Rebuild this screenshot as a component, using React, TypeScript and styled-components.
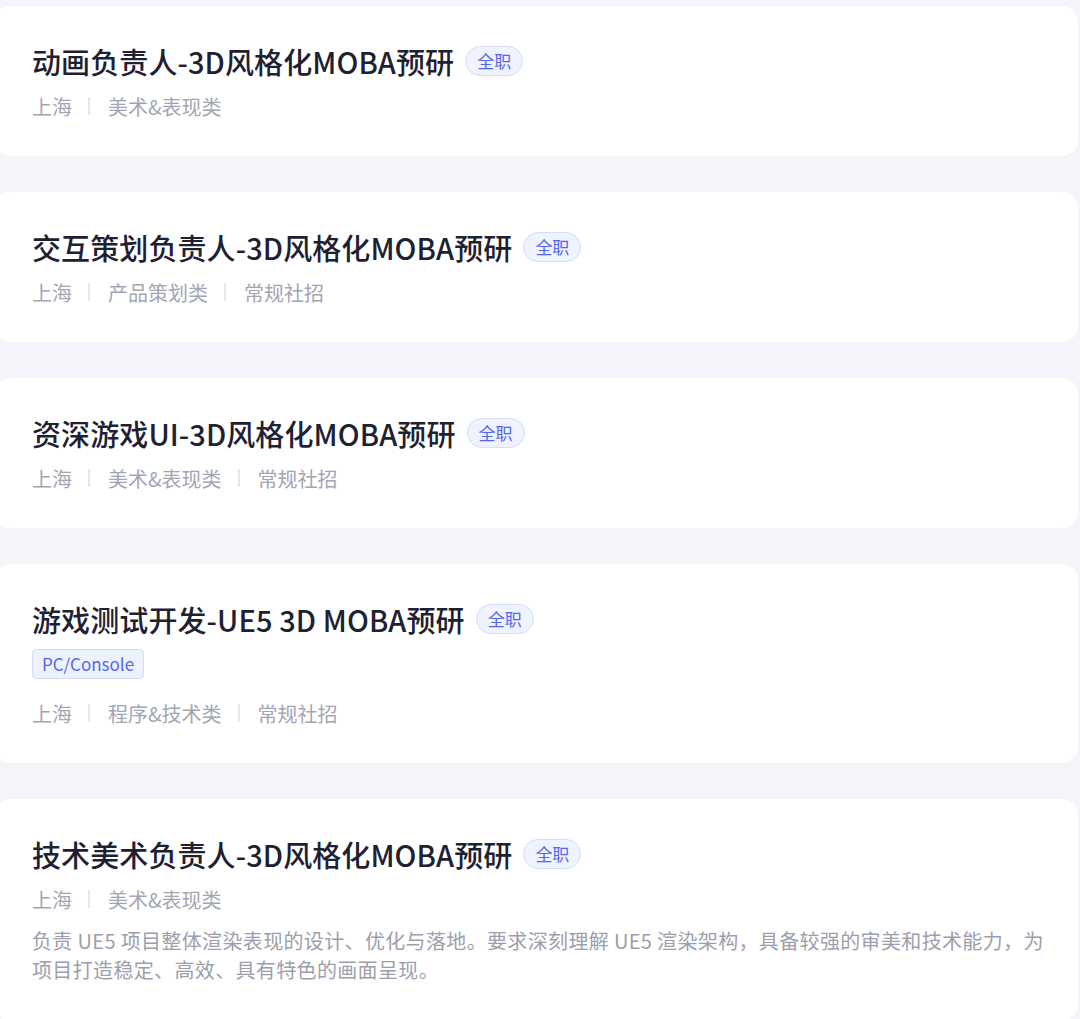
import React from 'react';
import styled, { createGlobalStyle } from 'styled-components';

interface IJob {
    title: string;
    platform?: string;
    meta: string[];
    desc?: string;
}

const jobs: IJob[] = [
    { title: '动画负责人-3D风格化MOBA预研', meta: ['上海', '美术&表现类'] },
    { title: '交互策划负责人-3D风格化MOBA预研', meta: ['上海', '产品策划类', '常规社招'] },
    { title: '资深游戏UI-3D风格化MOBA预研', meta: ['上海', '美术&表现类', '常规社招'] },
    { title: '游戏测试开发-UE5 3D MOBA预研', platform: 'PC/Console', meta: ['上海', '程序&技术类', '常规社招'] },
    {
        title: '技术美术负责人-3D风格化MOBA预研',
        meta: ['上海', '美术&表现类'],
        desc: '负责 UE5 项目整体渲染表现的设计、优化与落地。要求深刻理解 UE5 渲染架构，具备较强的审美和技术能力，为项目打造稳定、高效、具有特色的画面呈现。',
    },
];

const GlobalStyle = createGlobalStyle`
    html, body {
        margin: 0;
        padding: 0;
        background: #f4f5fa;
        overflow: hidden;
    }
    body {
        font-family: "Noto Sans CJK SC", "Noto Sans", sans-serif;
    }
`;

export default function App() {
    return (
        <>
            <GlobalStyle />
            <List>
                {jobs.map((job) => (
                    <Card key={job.title}>
                        <TitleRow>
                            <Title>{job.title}</Title>
                            <TypeBadge>全职</TypeBadge>
                        </TitleRow>
                        {job.platform && <PlatformTag>{job.platform}</PlatformTag>}
                        <MetaRow spaced={!!job.platform}>
                            {job.meta.map((m, i) => (
                                <React.Fragment key={m}>
                                    {i > 0 && <Divider />}
                                    <span>{m}</span>
                                </React.Fragment>
                            ))}
                        </MetaRow>
                        {job.desc && <Desc>{job.desc}</Desc>}
                    </Card>
                ))}
            </List>
        </>
    );
}

const List = styled.div`
    display: flex;
    flex-direction: column;
    gap: 36px;
    padding-top: 6px;
    margin-left: -6px;
    width: 1084px;
`;
const Card = styled.div`
    display: flex;
    flex-direction: column;
    align-items: flex-start;
    background: #ffffff;
    border-radius: 16px;
    padding: 37px 32px 36px 38px;
`;
const TitleRow = styled.div`
    display: flex;
    align-items: center;
    height: 36px;
`;
const Title = styled.div`
    font-size: 29px;
    font-weight: 500;
    color: #1e2132;
    line-height: 36px;
    letter-spacing: 0.1px;
`;
const TypeBadge = styled.span`
    margin-left: 11px;
    height: 28px;
    padding: 0 11px;
    border: 1px solid #d6dcfb;
    border-radius: 15px;
    background: #eff2ff;
    color: #5467ec;
    font-size: 17px;
    line-height: 28px;
`;
const PlatformTag = styled.span`
    margin-top: 12px;
    height: 28px;
    padding: 0 9px;
    border: 1px solid #d3dbfd;
    border-radius: 4px;
    background: #eef2ff;
    color: #5467ec;
    font-size: 17px;
    line-height: 28px;
`;
const MetaRow = styled.div<{ spaced: boolean }>`
    display: flex;
    align-items: center;
    margin-top: ${({ spaced }) => (spaced ? '20px' : '13px')};
    height: 28px;
    font-size: 20px;
    color: #a3a5b3;
`;
const Divider = styled.i`
    display: block;
    width: 2px;
    height: 18px;
    margin: 0 18px 0 16px;
    background: #e6e7ec;
`;
const Desc = styled.p`
    margin: 13px 0 0;
    max-width: 1022px;
    font-size: 20px;
    line-height: 29px;
    letter-spacing: 0.35px;
    color: #9c9eac;
`;
